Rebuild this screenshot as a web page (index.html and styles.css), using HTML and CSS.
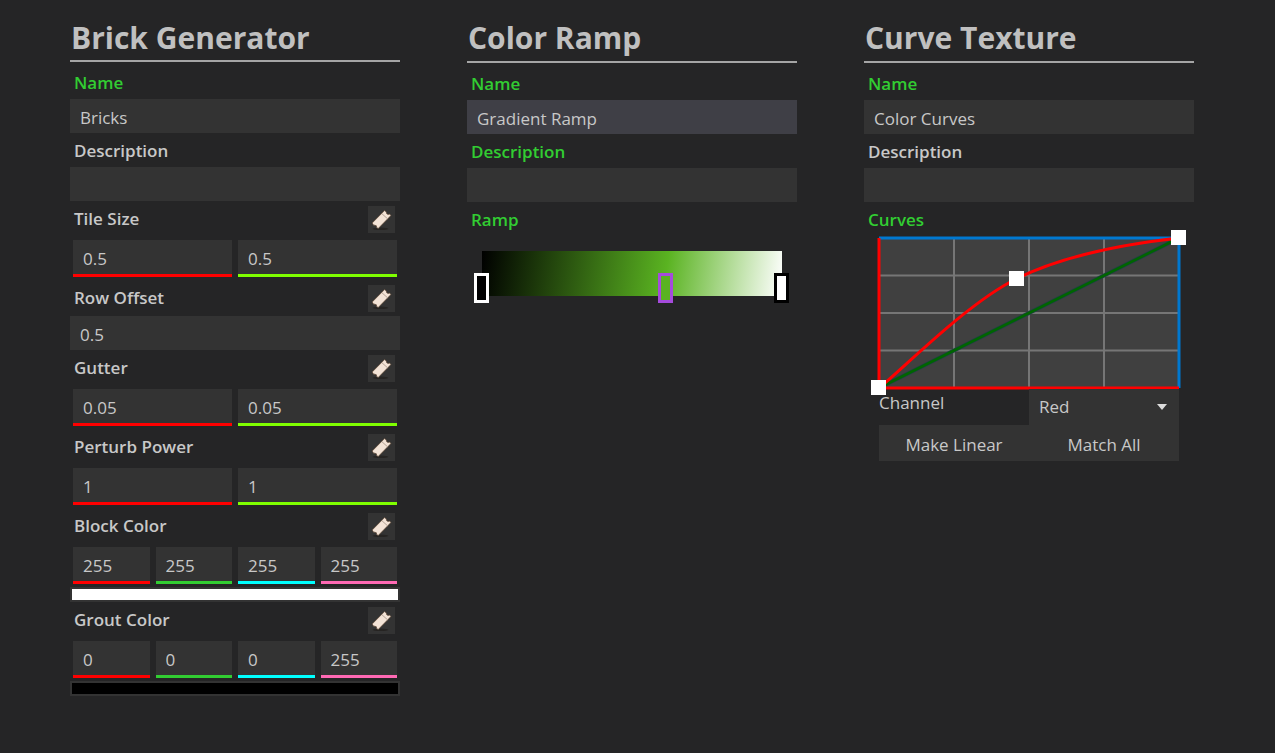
FILE: index.html
```html
<!DOCTYPE html>
<html lang="en">
<head>
<meta charset="utf-8">
<title>Node Properties</title>
<link rel="stylesheet" href="styles.css">
</head>
<body>
<svg class="defs" aria-hidden="true">
  <symbol id="ticket" viewBox="0 0 27 27">
    <ellipse cx="12.5" cy="22.8" rx="8" ry="1.2" fill="#262422"/>
    <path d="M16.5 4.6 L18.3 5.9 L18.6 7.6 L20 8.5 L21.6 8 L22.9 9.6 L10.2 22.5 L8.6 21.4 L8.4 19.8 L6.8 19.2 L5.6 19.2 L4.2 17 Z" fill="#f3e3d6" stroke="#5a4330" stroke-width=".7" stroke-linejoin="round"/>
    <path d="M14 7.8 L19.6 12.8" stroke="#b5a496" stroke-width="1"/>
  </symbol>
</svg>
<main class="board">
  <section class="panel">
    <h1 class="title compact">Brick Generator</h1>
    <label class="label exposed" for="brick-name">Name</label>
    <input class="text" id="brick-name" value="Bricks">
    <label class="label" for="brick-desc">Description</label>
    <input class="text" id="brick-desc">

    <div class="prop"><span class="prop-name">Tile Size</span><button class="promote" aria-label="Expose Tile Size"><svg><use href="#ticket"/></svg></button></div>
    <div class="fields">
      <input class="num red" aria-label="Tile Size X" value="0.5">
      <input class="num lime" aria-label="Tile Size Y" value="0.5">
    </div>
    <div class="prop"><label class="prop-name" for="row-offset">Row Offset</label><button class="promote" aria-label="Expose Row Offset"><svg><use href="#ticket"/></svg></button></div>
    <input class="text" id="row-offset" value="0.5">
    <div class="prop"><span class="prop-name">Gutter</span><button class="promote" aria-label="Expose Gutter"><svg><use href="#ticket"/></svg></button></div>
    <div class="fields">
      <input class="num red" aria-label="Gutter X" value="0.05">
      <input class="num lime" aria-label="Gutter Y" value="0.05">
    </div>
    <div class="prop"><span class="prop-name">Perturb Power</span><button class="promote" aria-label="Expose Perturb Power"><svg><use href="#ticket"/></svg></button></div>
    <div class="fields">
      <input class="num red" aria-label="Perturb Power X" value="1">
      <input class="num lime" aria-label="Perturb Power Y" value="1">
    </div>
    <div class="prop"><span class="prop-name">Block Color</span><button class="promote" aria-label="Expose Block Color"><svg><use href="#ticket"/></svg></button></div>
    <div class="fields">
      <input class="num red" aria-label="Block Color red" value="255">
      <input class="num green" aria-label="Block Color green" value="255">
      <input class="num cyan" aria-label="Block Color blue" value="255">
      <input class="num pink" aria-label="Block Color alpha" value="255">
    </div>
    <button class="swatch white" aria-label="Pick Block Color"></button>
    <div class="prop"><span class="prop-name">Grout Color</span><button class="promote" aria-label="Expose Grout Color"><svg><use href="#ticket"/></svg></button></div>
    <div class="fields">
      <input class="num red" aria-label="Grout Color red" value="0">
      <input class="num green" aria-label="Grout Color green" value="0">
      <input class="num cyan" aria-label="Grout Color blue" value="0">
      <input class="num pink" aria-label="Grout Color alpha" value="255">
    </div>
    <button class="swatch black" aria-label="Pick Grout Color"></button>
  </section>

  <section class="panel">
    <h1 class="title">Color Ramp</h1>
    <label class="label exposed" for="ramp-name">Name</label>
    <input class="text hovered" id="ramp-name" value="Gradient Ramp">
    <label class="label exposed" for="ramp-desc">Description</label>
    <input class="text" id="ramp-desc">
    <div class="label exposed">Ramp</div>
    <div class="ramp">
      <div class="gradient"></div>
      <input class="stop start" type="range" min="0" max="300" value="0" aria-label="Start stop">
      <input class="stop middle" type="range" min="0" max="300" value="184" aria-label="Middle stop">
      <input class="stop end" type="range" min="0" max="300" value="300" aria-label="End stop">
    </div>
  </section>

  <section class="panel">
    <h1 class="title">Curve Texture</h1>
    <label class="label exposed" for="curve-name">Name</label>
    <input class="text" id="curve-name" value="Color Curves">
    <label class="label" for="curve-desc">Description</label>
    <input class="text" id="curve-desc">
    <div class="label exposed">Curves</div>
    <div class="curves">
      <svg class="graph" viewBox="0 0 300 150" fill="none" role="img" aria-label="Red channel curve">
        <rect width="300" height="150" fill="#404040"/>
        <path d="M75 0V150M150 0V150M225 0V150M0 37.5H300M0 75H300M0 112.5H300" stroke="#767676" stroke-width="2"/>
        <path d="M0 0H300V150" stroke="#0078d0" stroke-width="3"/>
        <path d="M0 150L300 0" stroke="#1f3f48" stroke-width="4"/>
        <path d="M0 150L300 0" stroke="#006400" stroke-width="2.6"/>
        <path d="M0 0V150H300" stroke="#f00" stroke-width="3"/>
        <path d="M0 150C23 132 87 66 137 41C187 16 255 5 300 0" stroke="#f00" stroke-width="3"/>
        <path d="M-8 142h15v15h-15zM130 33h15v15h-15zM292 -8h15v15h-15z" fill="#fff"/>
      </svg>
      <div class="channel">
        <label class="channel-name" for="channel">Channel</label>
        <div class="select">
          <select id="channel"><option>Red</option><option>Green</option><option>Blue</option></select>
          <svg class="caret" viewBox="0 0 10 6" aria-hidden="true"><path d="M0 0H10L5 6Z" fill="#ddd"/></svg>
        </div>
      </div>
      <div class="actions">
        <button class="action">Make Linear</button>
        <button class="action">Match All</button>
      </div>
    </div>
  </section>
</main>
</body>
</html>
```
FILE: styles.css
```css
* { box-sizing: border-box; }

body {
  margin: 0;
  background: #252526;
  color: #c8c8c8;
  font: 17px/24px "Open Sans", "Noto Sans", sans-serif;
}

input, button, select {
  margin: 0;
  padding: 0;
  border: 0;
  border-radius: 0;
  color: inherit;
  font: inherit;
  min-width: 0;
}

.defs { position: absolute; width: 0; height: 0; }

.board {
  display: grid;
  grid-template-columns: repeat(3, 1fr);
  align-items: start;
  gap: 67px;
  min-height: 100vh;
  padding: 16px 81px 16px 70px;
}

.panel { display: flex; flex-direction: column; }

.title {
  margin: 0;
  padding: 0 1px;
  height: 47px;
  border-bottom: 2px solid #a5a5a5;
  font-size: 30px;
  line-height: 44px;
  font-weight: 700;
  color: #c0c0c0;
}

.compact { height: 46px; }

.label {
  height: 34px;
  padding: 6px 4px 4px;
  font-weight: 600;
}

.title + .label { height: 37px; padding-top: 9px; }

.exposed { color: #32cd32; }

.text {
  width: 100%;
  height: 34px;
  padding: 2px 10px 0;
  background: #333;
}

.hovered { background: #3f3f46; }

.prop {
  display: flex;
  justify-content: space-between;
  height: 36px;
  padding: 5px 5px 4px 4px;
}

.prop-name { padding-top: 1px; font-weight: 600; }

.promote { width: 27px; height: 27px; background: #333; }
.promote svg { display: block; width: 27px; height: 27px; }

.fields { display: flex; gap: 6px; padding: 3px; }

.num {
  flex: 1;
  width: 0;
  height: 37px;
  padding: 2px 10px 0;
  background: #333;
  border-bottom: 3px solid;
}

.red { border-bottom-color: #f00; }
.lime { border-bottom-color: #7fff00; }
.green { border-bottom-color: #32cd32; }
.cyan { border-bottom-color: #0ff; }
.pink { border-bottom-color: #ff69b4; }

.swatch { height: 15px; border: 2px solid #333; }
.white { background: #fff; }
.black { background: #000; }

.ramp { display: grid; padding-top: 15px; }

.gradient {
  grid-area: 1 / 1;
  height: 45px;
  margin: 0 15px;
  background: linear-gradient(98.5deg, #000, #5ab321 61%, #fff);
}

.stop {
  grid-area: 1 / 1;
  height: 30px;
  margin: 22px 8px 0 7px;
  appearance: none;
  background: none;
  pointer-events: none;
}

.stop::-webkit-slider-thumb {
  appearance: none;
  width: 15px;
  height: 30px;
  border: 3px solid;
  pointer-events: auto;
}

.start::-webkit-slider-thumb { background: #000; border-color: #fff; }
.middle::-webkit-slider-thumb { background: #5ab321; border-color: #a54bdc; }
.end::-webkit-slider-thumb { background: #fff; border-color: #000; }

.curves { padding: 2px 15px 0; }

.graph { display: block; width: 100%; overflow: visible; }

.channel { display: grid; grid-template-columns: 1fr 1fr; padding-top: 1px; }
.channel-name { padding-top: 2px; }

.select { display: grid; align-items: center; background: #333; }
.select select {
  grid-area: 1 / 1;
  height: 36px;
  padding: 0 10px;
  appearance: none;
  background: none;
}
.caret {
  grid-area: 1 / 1;
  justify-self: end;
  width: 10px;
  height: 6px;
  margin-right: 12px;
  pointer-events: none;
}

.actions { display: grid; grid-template-columns: 1fr 1fr; }
.action { height: 36px; padding-top: 3px; background: #333; }
```
